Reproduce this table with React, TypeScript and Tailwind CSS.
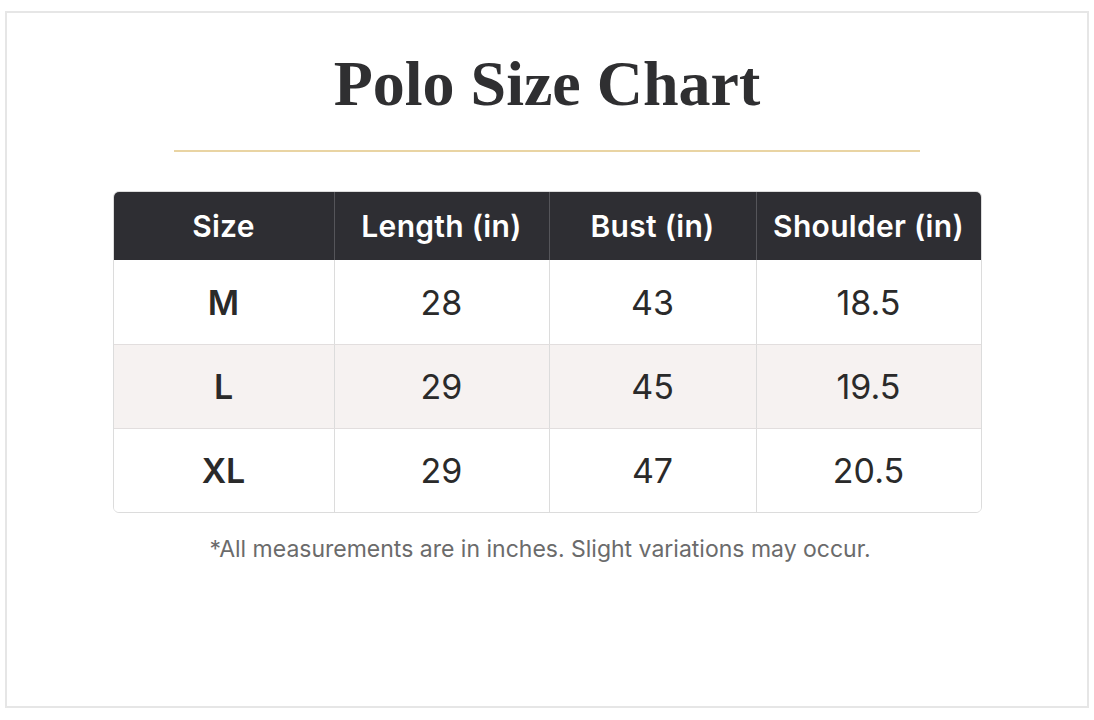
const rows = [
  { size: 'M', length: '28', bust: '43', shoulder: '18.5' },
  { size: 'L', length: '29', bust: '45', shoulder: '19.5' },
  { size: 'XL', length: '29', bust: '47', shoulder: '20.5' },
];

const cols = ['w-[220px]', 'w-[215px]', 'w-[207px]', 'flex-1'];

export default function App() {
  return (
    <div className="w-[1094px] h-[720px] bg-white pt-[11px] pl-[5px]">
      <div className="w-[1084px] h-[697px] border-2 border-[#e6e6e6] bg-white flex flex-col items-center">
        <h1 className="mt-[31px] text-[64px] leading-[80px] font-bold text-[#2f2f31] font-['Liberation_Serif',serif]">
          Polo Size Chart
        </h1>
        <div className="mt-[26px] w-[746px] h-[2px] bg-[#e9d4a3]" />
        <div className="mt-[39px] w-[869px] rounded-[6px] border border-[#dcdcdc] overflow-hidden font-['Inter',sans-serif]">
          <div className="flex h-[68px] bg-[#2e2e33] text-white text-[30px] tracking-[0.3px] font-semibold">
            {['Size', 'Length (in)', 'Bust (in)', 'Shoulder (in)'].map((h, i) => (
              <div
                key={h}
                className={`${cols[i]} flex items-center justify-center ${i > 0 ? 'border-l border-[#55555a]' : ''}`}
              >
                {h}
              </div>
            ))}
          </div>
          {rows.map((r, ri) => (
            <div
              key={r.size}
              className={`flex h-[84px] text-[34px] text-[#2a2a2a] ${ri > 0 ? 'border-t border-[#e2dede]' : ''} ${ri === 1 ? 'bg-[#f6f2f1]' : 'bg-white'}`}
            >
              {[r.size, r.length, r.bust, r.shoulder].map((v, i) => (
                <div
                  key={i}
                  className={`${cols[i]} flex items-center justify-center ${i === 0 ? 'font-semibold' : ''} ${i > 0 ? 'border-l border-[#dcdcdc]' : ''}`}
                >
                  {v}
                </div>
              ))}
            </div>
          ))}
        </div>
        <p className="mt-[19px] mr-[14px] text-[23px] text-[#6b6b6b] font-['Inter',sans-serif]">
          *All measurements are in inches. Slight variations may occur.
        </p>
      </div>
    </div>
  );
}
